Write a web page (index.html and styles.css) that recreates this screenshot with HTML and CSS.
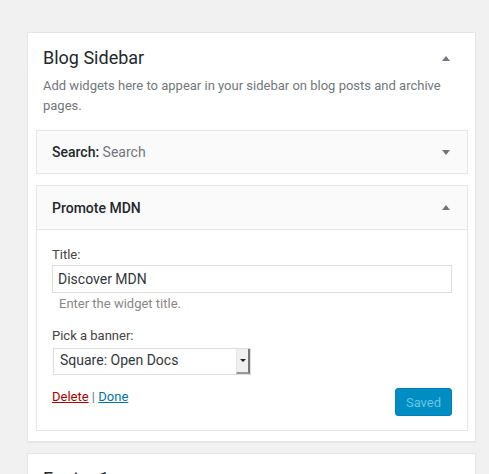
FILE: index.html
```html
<!DOCTYPE html>
<html>
<head>
<meta charset="utf-8">
<link rel="stylesheet" href="styles.css">
</head>
<body>
<div class="area">
  <section class="sidebar">
    <div class="sidebar-head">
      <h2>Blog Sidebar</h2>
      <span class="arrow up"></span>
    </div>
    <p class="desc">Add widgets here to appear in your sidebar on blog posts and archive pages.</p>
    <div class="widget">
      <div class="widget-top">
        <h3>Search:<span class="in-title"> Search</span></h3>
        <span class="arrow down"></span>
      </div>
    </div>
    <div class="widget">
      <div class="widget-top open">
        <h3>Promote MDN</h3>
        <span class="arrow up"></span>
      </div>
      <div class="widget-inside">
        <label class="lbl">Title:</label>
        <input class="text" type="text" value="Discover MDN">
        <p class="hint">Enter the widget title.</p>
        <label class="lbl lbl-banner">Pick a banner:</label>
        <div class="select">
          <span class="select-val">Square: Open Docs</span>
          <span class="select-btn"><span class="caret"></span></span>
        </div>
        <div class="controls">
          <div class="links"><a class="del" href="#">Delete</a><span class="sep"> | </span><a class="done" href="#">Done</a></div>
          <button class="saved" type="button">Saved</button>
        </div>
      </div>
    </div>
  </section>
  <section class="sidebar next">
    <div class="sidebar-head">
      <h2>Footer 1</h2>
      <span class="arrow up"></span>
    </div>
  </section>
</div>
</body>
</html>
```

FILE: styles.css
```css
* { box-sizing: border-box; }
html, body { height: 100%; }
body {
  margin: 0;
  background: #f1f1f1;
  font-family: Roboto, "Liberation Sans", sans-serif;
  color: #23282d;
  overflow: hidden;
}
.area { padding: 32px 13px 0 27px; }
.sidebar {
  background: #fff;
  border: 1px solid #e5e5e5;
  box-shadow: 0 1px 1px rgba(0,0,0,.04);
  padding: 13px 7px 10px 8px;
}
.sidebar.next { margin-top: 11px; padding-top: 13px; }
.sidebar-head {
  display: flex;
  justify-content: space-between;
  align-items: center;
  padding: 0 18px 0 7px;
  height: 24px;
}
.sidebar-head h2 {
  margin: 0;
  font-size: 18px;
  font-weight: 400;
  line-height: 24px;
  color: #23282d;
}
.arrow {
  width: 0; height: 0;
  border-left: 4px solid transparent;
  border-right: 4px solid transparent;
}
.arrow.up { border-bottom: 5px solid #72777c; }
.arrow.down { border-top: 5px solid #72777c; }
.desc {
  margin: 6px 0 15px;
  padding: 0 7px;
  font-size: 13px;
  line-height: 19.5px;
  color: #72777c;
}
.widget {
  border: 1px solid #e5e5e5;
  background: #fff;
  margin-bottom: 11px;
}
.widget:last-child { margin-bottom: 0; }
.widget-top {
  display: flex;
  justify-content: space-between;
  align-items: center;
  height: 42px;
  padding: 0 17px 0 15px;
  background: #fafafa;
}
.widget-top.open {
  height: 44px;
  border-bottom: 1px solid #e5e5e5;
}
.widget-top h3 {
  margin: 0;
  font-size: 14px;
  font-weight: 500;
  color: #23282d;
}
.in-title { font-weight: 400; color: #72777c; }
.widget-inside {
  padding: 16px 15px 14px;
}
.lbl {
  display: block;
  font-size: 13px;
  line-height: 18px;
  color: #444;
}
.text {
  display: block;
  width: 100%;
  height: 28px;
  margin-top: 1px;
  border: 1px solid #ddd;
  padding: 0 5px;
  font: 14px Roboto, "Liberation Sans", sans-serif;
  color: #32373c;
  background: #fff;
  outline: none;
}
.hint {
  margin: 2px 0 0;
  padding-left: 7px;
  font-size: 13px;
  line-height: 18px;
  color: #888;
}
.lbl-banner { margin-top: 14px; }
.select {
  display: flex;
  width: 198px;
  height: 27px;
  margin: 3px 0 0 1px;
  border: 1px solid #ddd;
  background: #fff;
}
.select-val {
  flex: 1;
  padding-left: 6px;
  font-size: 14px;
  line-height: 23px;
  color: #32373c;
}
.select-btn {
  width: 14px;
  display: flex;
  align-items: center;
  justify-content: center;
  background: #f0f0f0;
  border-left: 1px solid #e8e8e8;
  border-right: 2px solid #777;
  border-bottom: 2px solid #999;
}
.caret {
  width: 0; height: 0;
  border-left: 3px solid transparent;
  border-right: 3px solid transparent;
  border-top: 3px solid #222;
}
.controls {
  display: flex;
  justify-content: space-between;
  align-items: flex-start;
  margin-top: 13px;
}
.links { font-size: 13px; line-height: 18px; color: #72777c; padding-top: 0; }
.links a { text-decoration: underline; }
.del { color: #a00; }
.done { color: #0073aa; }
.saved {
  width: 57px;
  height: 28px;
  border: 1px solid #0081b6;
  border-radius: 3px;
  background: #008ec2;
  color: #66c6e4;
  font: 13px Roboto, "Liberation Sans", sans-serif;
  padding: 0;
}
```
